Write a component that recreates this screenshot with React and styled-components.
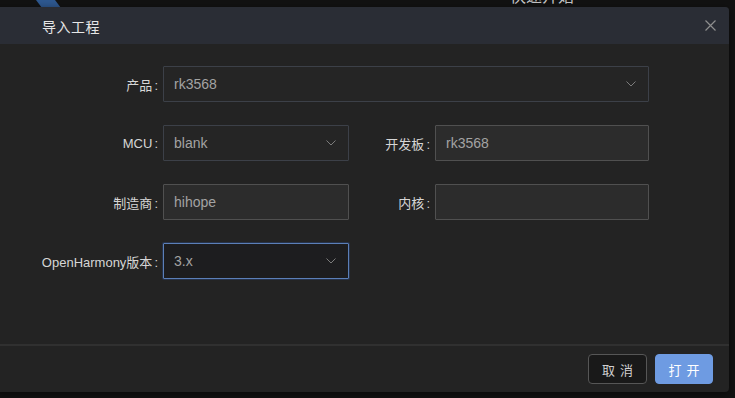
import React from "react";
import styled, { createGlobalStyle } from "styled-components";

const GlobalStyle = createGlobalStyle`
  html, body {
    margin: 0;
    padding: 0;
    background: #121212;
    font-family: "Liberation Sans", "Noto Sans CJK SC", Arial, sans-serif;
    overflow: hidden;
  }
`;

const Page = styled.div`
  position: relative;
  width: 735px;
  height: 398px;
  background: #121212;
  overflow: hidden;
`;

/* background app peeking out above the modal */
const Backdrop = styled.div`
  display: flex;
  height: 8px;
  overflow: hidden;
`;

const Banner = styled.svg`
  margin-left: 36px;
  flex: none;
`;

const BackTitle = styled.span`
  margin-left: 448px;
  margin-top: -14px;
  font-size: 16px;
  color: #c8c8c8;
  font-family: "Noto Sans CJK SC", sans-serif;
  line-height: 18px;
`;

const Dialog = styled.div`
  position: absolute;
  left: -4px;
  top: 7px;
  width: 733px;
  height: 385px;
  display: flex;
  flex-direction: column;
  background: #232323;
  border-radius: 4px;
  overflow: hidden;
  box-shadow: 0 2px 8px rgba(0, 0, 0, 0.5);
`;

const Header = styled.div`
  display: flex;
  align-items: center;
  justify-content: space-between;
  height: 37px;
  flex: none;
  padding: 0 13px 0 46px;
  background: #2a2d35;
`;

const Title = styled.span`
  font-family: "Noto Sans CJK SC", sans-serif;
  font-size: 14px;
  letter-spacing: 0.5px;
  color: #e6e6e6;
`;

const Close = styled.button`
  display: flex;
  padding: 0;
  border: none;
  background: transparent;
  cursor: pointer;
`;

const Body = styled.div`
  flex: 1;
  display: flex;
  flex-direction: column;
  gap: 23px;
  padding: 22px 0 0 4px;
`;

const Row = styled.div`
  display: flex;
  align-items: center;
  height: 36px;
`;

const Label = styled.label`
  width: ${(p) => p.$w}px;
  flex: none;
  padding-right: 5px;
  box-sizing: border-box;
  text-align: right;
  font-size: 13px;
  color: #d6d6d6;
  white-space: nowrap;
`;

const Colon = styled.span`
  margin-left: 2px;
`;

const Box = styled.div`
  width: ${(p) => p.$w}px;
  height: 36px;
  flex: none;
  box-sizing: border-box;
  display: flex;
  align-items: center;
  justify-content: space-between;
  padding: 0 12px 0 10px;
  font-size: 14px;
  color: #a3a3a3;
  border-radius: 1px;
  background: ${(p) => (p.$disabled ? "#2c2c2c" : p.$focused ? "#1d1d1f" : "#252525")};
  border: 1px solid
    ${(p) => (p.$disabled ? "#505050" : p.$focused ? "#5b7fb8" : "#3c4048")};
  box-shadow: ${(p) => (p.$focused ? "0 0 0 1px rgba(40,60,100,0.6)" : "none")};
`;

const Footer = styled.div`
  height: 46px;
  flex: none;
  display: flex;
  align-items: center;
  justify-content: flex-end;
  gap: 8px;
  padding-right: 16px;
  border-top: 2px solid #303030;
`;

const Button = styled.button`
  width: ${(p) => (p.$primary ? 58 : 59)}px;
  height: 30px;
  box-sizing: border-box;
  border-radius: 4px;
  font-family: "Noto Sans CJK SC", sans-serif;
  font-size: 13px;
  letter-spacing: 5px;
  padding: 0 0 0 5px;
  cursor: pointer;
  color: ${(p) => (p.$primary ? "#ffffff" : "#d0d0d0")};
  background: ${(p) => (p.$primary ? "#6e9be2" : "#191919")};
  border: 1px solid ${(p) => (p.$primary ? "#6e9be2" : "#565656")};
`;

const Chevron = () => (
  <svg width="10" height="6" viewBox="0 0 10 6">
    <path d="M0.5 0.5 L5 5 L9.5 0.5" fill="none" stroke="#7c7c7c" strokeWidth="1" />
  </svg>
);

const Field = ({ width, value, select, disabled, focused }) => (
  <Box $w={width} $disabled={disabled} $focused={focused}>
    <span>{value}</span>
    {select && <Chevron />}
  </Box>
);

const FieldLabel = ({ width, children }) => (
  <Label $w={width}>
    {children}
    <Colon>:</Colon>
  </Label>
);

const App = () => (
  <>
    <GlobalStyle />
    <Page>
      <Backdrop>
        <Banner width="26" height="8" viewBox="0 0 26 8">
          <path d="M0 0 L19 0 L25 8 L6 8 Z" fill="#2e5890" />
        </Banner>
        <BackTitle>快速开始</BackTitle>
      </Backdrop>
      <Dialog>
        <Header>
          <Title>导入工程</Title>
          <Close aria-label="close">
            <svg width="11" height="11" viewBox="0 0 11 11">
              <path d="M0.5 0.5 L10.5 10.5 M10.5 0.5 L0.5 10.5" stroke="#8e8e8e" strokeWidth="1.2" />
            </svg>
          </Close>
        </Header>
        <Body>
          <Row>
            <FieldLabel width={163}>产品</FieldLabel>
            <Field width={486} value="rk3568" select />
          </Row>
          <Row>
            <FieldLabel width={163}>MCU</FieldLabel>
            <Field width={186} value="blank" select />
            <FieldLabel width={86}>开发板</FieldLabel>
            <Field width={214} value="rk3568" disabled />
          </Row>
          <Row>
            <FieldLabel width={163}>制造商</FieldLabel>
            <Field width={186} value="hihope" disabled />
            <FieldLabel width={86}>内核</FieldLabel>
            <Field width={214} value="" disabled />
          </Row>
          <Row>
            <FieldLabel width={163}>OpenHarmony版本</FieldLabel>
            <Field width={186} value="3.x" select focused />
          </Row>
        </Body>
        <Footer>
          <Button>取消</Button>
          <Button $primary>打开</Button>
        </Footer>
      </Dialog>
    </Page>
  </>
);

export default App;
